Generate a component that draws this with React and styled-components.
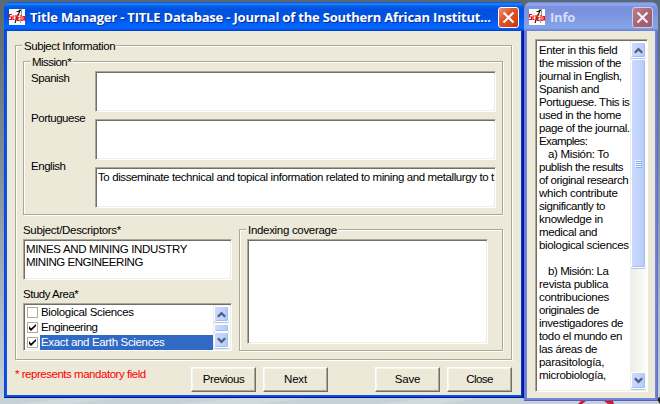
import React from 'react';
import styled, { createGlobalStyle, css } from 'styled-components';

const Global = createGlobalStyle`
  * { box-sizing: border-box; }
  body { margin: 0; overflow: hidden; font: 11.5px/14px "Liberation Sans", Arial, sans-serif; color: #000; }
`;

const Desktop = styled.div`
  position: relative;
  display: flex;
  align-items: flex-start;
  width: 660px;
  height: 404px;
  padding: 2px 0 0 4px;
  background: linear-gradient(#586973 0, #64757e 60px, #8494a0 190px, #a9b6c2 300px, #c7d2d7 404px);
`;

const Wallpaper = styled.svg`
  position: absolute;
  left: 0;
  top: 396px;
`;

const Window = styled.section`
  display: flex;
  flex-direction: column;
  width: ${p => p.$w}px;
  height: ${p => p.$h}px;
  border-radius: 7px 7px 0 0;
  overflow: hidden;
  background: ${p => p.$inactive
    ? 'linear-gradient(90deg, #6171cc 0, #7485de 2px, #7485de calc(100% - 2px), #5a68c4 100%)'
    : 'linear-gradient(90deg, #0030d4 0, #1058e8 1px, #0d50e0 2px, #0b50e0 calc(100% - 3px), #0028b8 calc(100% - 2px), #00138c 100%)'};
  box-shadow: inset 0 -1px 0 ${p => p.$inactive ? '#5060c0' : '#00138c'};
`;

const TitleBar = styled.header`
  display: flex;
  align-items: center;
  flex: none;
  height: 29px;
  padding: 1px 5px 0 5px;
  background: ${p => p.$inactive
    ? 'linear-gradient(#7083d8 0, #93a8ec 2px, #7d92de 5px, #7b90de 9px, #82a0e6 22px, #83a4e8 26px, #7388da 28px, #6d80d4 29px)'
    : 'linear-gradient(#0d4fd0 0, #2a86fb 2px, #0560ea 4px, #0050dc 8px, #0054e4 16px, #0062fa 22px, #0464ff 26px, #0050e2 28px, #0038bc 29px)'};
`;

const Title = styled.h1`
  flex: 1;
  margin: 0 0 0 4px;
  font: bold 13px/18px "Open Sans", "Noto Sans", sans-serif;
  letter-spacing: -0.2px;
  white-space: nowrap;
  color: ${p => p.$inactive ? '#d3def9' : '#fff'};
  ${p => !p.$inactive && css`text-shadow: 1px 1px 0 #0a2a8c;`}
`;

const CloseBox = styled.button`
  display: grid;
  place-items: center;
  width: 21px;
  height: 21px;
  padding: 0;
  border: 1px solid ${p => p.$inactive ? '#c9cdf0' : '#fff'};
  border-radius: 3px;
  background: ${p => p.$inactive
    ? 'linear-gradient(135deg, #c1808c, #a4606f 60%, #9a5b76)'
    : 'linear-gradient(135deg, #f09070, #e2552c 40%, #d8431a 75%, #b92f08)'};
`;

const Body = styled.div`
  flex: 1;
  margin: 0 3px 3px;
  padding: ${p => p.$pad};
  background: #ece9d8;
`;

const Text = styled.span`
  display: block;
  letter-spacing: ${p => p.$ls ?? -0.38}px;
  white-space: pre;
`;

const Group = styled.div`
  width: ${p => p.$w}px;
  height: ${p => p.$h}px;
  margin: ${p => p.$m || 0};
  border: 1px solid #aca899;
  box-shadow: 1px 1px 0 #fff, inset 1px 1px 0 #fff;
`;

const Legend = styled(Text)`
  width: ${p => p.$w}px;
  height: 14px;
  margin: -7px 0 0 6px;
  padding-left: 2px;
  background: #ece9d8;
`;

const Well = styled.div`
  width: ${p => p.$w}px;
  height: ${p => p.$h}px;
  margin: ${p => p.$m || 0};
  background: #fff;
  border: 1px solid;
  border-color: #aca899 #fff #fff #aca899;
  box-shadow: inset 1px 1px 0 #716f64, inset -1px -1px 0 #f1efe2;
  padding: ${p => p.$pad || 0};
`;

const Fields = styled.div`
  display: flex;
  flex-direction: column;
  gap: 7px;
  padding: 2px 0 0 7px;
`;

const FieldRow = styled.div`
  display: flex;
`;

const FieldLabel = styled(Text)`
  width: 64px;
  margin-top: ${p => p.$shift}px;
`;

const Lower = styled.div`
  display: flex;
  gap: 7px;
  margin: 8px 0 0 7px;
`;

const LeftColumn = styled.div`
  width: 209px;
`;

const Label = styled(Text)`
  height: 16px;
  margin-top: ${p => p.$top || 0}px;
`;

const CheckWell = styled(Well)`
  display: flex;
`;

const CheckList = styled.div`
  flex: 1;
`;

const CheckRow = styled.div`
  display: flex;
  align-items: center;
  height: 15px;
  padding-left: 2px;
`;

const CheckBox = styled.span`
  display: grid;
  place-items: center;
  width: 11px;
  height: 11px;
  margin-right: 2px;
  border: 1px solid #b0ad9c;
  background: #fff;
`;

const CheckText = styled(Text)`
  flex: 1;
  height: 15px;
  padding-left: 1px;
  line-height: 14px;
  ${p => p.$on && css`background: #316ac5; color: #fff;`}
`;

const Footer = styled.footer`
  display: flex;
  gap: 7px;
  margin-top: 7px;
`;

const Mandatory = styled(Text)`
  width: 169px;
  color: #f00;
`;

const Button = styled.button`
  width: 65px;
  height: 25px;
  margin: 0 0 0 ${p => p.$gap || 0}px;
  padding: 0 0 1px;
  font: inherit;
  letter-spacing: ${p => p.$ls}px;
  color: #000;
  background: #ece9d8;
  border: 1px solid;
  border-color: #fff #716f64 #716f64 #fff;
  box-shadow: inset -1px -1px 0 #aca899, inset 1px 1px 0 #f8f6ec;
`;

const InfoWell = styled(Well)`
  display: flex;
`;

const InfoText = styled.div`
  flex: 1;
  padding: 3px 0 0 2px;
`;

const Line = styled(Text)`
  height: 13px;
  line-height: 13px;
  padding-left: ${p => p.$indent ? 9 : 0}px;
`;

const Track = styled.div`
  display: flex;
  flex-direction: column;
  flex: none;
  width: 17px;
  padding: 1px;
  background: linear-gradient(90deg, #eeede6, #fdfdfa);
`;

const ScrollPart = styled.div`
  display: grid;
  place-items: center;
  flex: none;
  height: ${p => p.$h}px;
  margin: ${p => p.$m || 0};
  border: 1px solid #fff;
  border-radius: 2px;
  background: linear-gradient(90deg, #cad9fe, #c1d3fc 60%, #b4c8f4);
  box-shadow: inset -1px -1px 0 #a2bdf0, 0 1px 0 #b0c4ea;
`;

const Spacer = styled.div`
  flex: 1;
`;

const Logo = () => (
  <svg width="17" height="17" viewBox="0 0 17 17">
    <rect width="16" height="16" fill="#fff" />
    <path d="M7.500 2.500h2l2-2M11.500 1L8 8l-2 6" stroke="#222" strokeWidth="1.200" fill="none" />
    <path d="M12.500 0v7M9 9l3 5" stroke="#999" fill="none" />
    <path d="M3 5.500H.5v2.500h2v2.500H0M5.500 7H4v3.500h1.500M7 6v5M10.500 6H8.500v5.500h2M8.500 8.500h2M12 6v5.500h1.500M14 7.500h1.500v3.500H14z" stroke="#f01010" strokeWidth="1.200" fill="none" />
  </svg>
);

const Cross = ({ color = '#fff' }) => (
  <svg width="13" height="13" viewBox="0 0 13 13">
    <path d="M1.500 1.500l10 10M11.500 1.500l-10 10" stroke={color} strokeWidth="2.200" />
  </svg>
);

const Chevron = ({ down }) => (
  <svg width="9" height="7" viewBox="0 0 9 7">
    <path d={down ? 'M.8 1.200l3.700 3.700 3.700-3.700' : 'M.8 5.800l3.700-3.700 3.700 3.700'} stroke="#4d6185" strokeWidth="2.300" fill="none" />
  </svg>
);

const Tick = () => (
  <svg width="9" height="9" viewBox="0 0 9 9">
    <path d="M1 3v3l2 2 5-5V1L3 5.500z" fill="#000" />
  </svg>
);

const Grip = () => (
  <svg width="7" height="8" viewBox="0 0 7 8" shapeRendering="crispEdges">
    <path d="M0 .5h6M0 2.500h6M0 4.500h6M0 6.500h6" stroke="#eef4fe" />
    <path d="M1 1.500h6M1 3.500h6M1 5.500h6M1 7.500h6" stroke="#8cb0f8" />
  </svg>
);

const missions = [
  ['Spanish', 0, -0.44, ''],
  ['Portuguese', -8, -0.47, ''],
  ['English', -8, -0.46, 'To disseminate technical and topical information related to mining and metallurgy to t'],
];

const areas = [
  ['Biological Sciences', false, false, -0.34],
  ['Engineering', true, false, -0.44],
  ['Exact and Earth Sciences', true, true, -0.34],
];

const info = [
  ['Enter in this field', -0.36], ['the mission of the', -0.45], ['journal in English,', -0.43],
  ['Spanish and', -0.36], ['Portuguese. This is', -0.41], ['used in the home', -0.39],
  ['page of the journal.', -0.39], ['Examples:', -0.6], ['a) Misión: To', -0.32, true],
  ['publish the results', -0.46], ['of original research', -0.43], ['which contribute', -0.28],
  ['significantly to', -0.39], ['knowledge in', -0.26], ['medical and', -0.36],
  ['biological sciences', -0.33], ['', 0], ['b) Misión: La', -0.41, true],
  ['revista publica', -0.3], ['contribuciones', -0.3], ['originales de', -0.4],
  ['investigadores de', -0.36], ['todo el mundo en', -0.37], ['las áreas de', -0.38],
  ['parasitología,', -0.28], ['microbiología,', -0.33],
];

export default function App() {
  return (
    <>
      <Global />
      <Desktop>
        <Wallpaper width="660" height="8" viewBox="0 0 660 8">
          <path d="M20 8l50-6h50L70 8zM180 8l60-6h70l-50 6zM380 8l50-6h50l-40 6z" fill="#d5dee2" opacity=".6" />
          <path d="M578 8l3-3h5l-4 3zM604 5h9l1 3h-6z" fill="#e0142c" />
          <path d="M658 2l2-1v7l-2-3z" fill="#222" />
        </Wallpaper>

        <Window $w={520} $h={396}>
          <TitleBar>
            <Logo />
            <Title>Title Manager - TITLE Database - Journal of the Southern African Institut...</Title>
            <CloseBox aria-label="Close window"><Cross /></CloseBox>
          </TitleBar>
          <Body $pad="14px 0 0 8px">
            <Group $w={497} $h={315}>
              <Legend $w={94} $ls={-0.42}>Subject Information</Legend>
              <Group $w={480} $h={154} $m="8px 0 0 7px">
                <Legend $w={43} $ls={-0.55}>Mission*</Legend>
                <Fields>
                  {missions.map(([label, shift, ls, value]) => (
                    <FieldRow key={label}>
                      <FieldLabel $shift={shift} $ls={ls}>{label}</FieldLabel>
                      <Well $w={401} $h={41} $pad="2px 0 0 2px"><Text $ls={-0.4}>{value}</Text></Well>
                    </FieldRow>
                  ))}
                </Fields>
              </Group>
              <Lower>
                <LeftColumn>
                  <Label $ls={-0.31}>Subject/Descriptors*</Label>
                  <Well $w={209} $h={41} $pad="3px 0 0 2px">
                    <Line $ls={-0.35}>MINES AND MINING INDUSTRY</Line>
                    <Line $ls={-0.46}>MINING ENGINEERING</Line>
                  </Well>
                  <Label $top={7} $ls={-0.49}>Study Area*</Label>
                  <CheckWell $w={209} $h={48} $pad="1px">
                    <CheckList>
                      {areas.map(([name, checked, on, ls]) => (
                        <CheckRow key={name}>
                          <CheckBox>{checked && <Tick />}</CheckBox>
                          <CheckText $on={on} $ls={ls}>{name}</CheckText>
                        </CheckRow>
                      ))}
                    </CheckList>
                    <Track>
                      <ScrollPart $h={16}><Chevron /></ScrollPart>
                      <ScrollPart $h={8} $m="2px 0 0" />
                      <Spacer />
                      <ScrollPart $h={16}><Chevron down /></ScrollPart>
                    </Track>
                  </CheckWell>
                </LeftColumn>
                <Group $w={264} $h={122} $m="6px 0 0">
                  <Legend $w={92} $ls={-0.31}>Indexing coverage</Legend>
                  <Well $w={241} $h={105} $m="2px 0 0 7px" />
                </Group>
              </Lower>
            </Group>
            <Footer>
              <Mandatory $ls={-0.47}>* represents mandatory field</Mandatory>
              <Button $ls={-0.4}>Previous</Button>
              <Button $ls={-0.16}>Next</Button>
              <Button $gap={40} $ls={-0.18}>Save</Button>
              <Button $ls={-0.6}>Close</Button>
            </Footer>
          </Body>
        </Window>

        <Window $w={134} $h={399} $inactive>
          <TitleBar $inactive>
            <Logo />
            <Title $inactive>Info</Title>
            <CloseBox $inactive aria-label="Close info"><Cross color="#eef0fb" /></CloseBox>
          </TitleBar>
          <Body $pad="8px 0 0 8px">
            <InfoWell $w={113} $h={353} $pad="1px 0 1px 1px">
              <InfoText>
                {info.map(([line, ls, indent], i) => (
                  <Line key={i} $ls={ls} $indent={indent}>{line}</Line>
                ))}
              </InfoText>
              <Track>
                <ScrollPart $h={16}><Chevron /></ScrollPart>
                <ScrollPart $h={209} $m="1px 0 0"><Grip /></ScrollPart>
                <Spacer />
                <ScrollPart $h={17}><Chevron down /></ScrollPart>
              </Track>
            </InfoWell>
          </Body>
        </Window>
      </Desktop>
    </>
  );
}
